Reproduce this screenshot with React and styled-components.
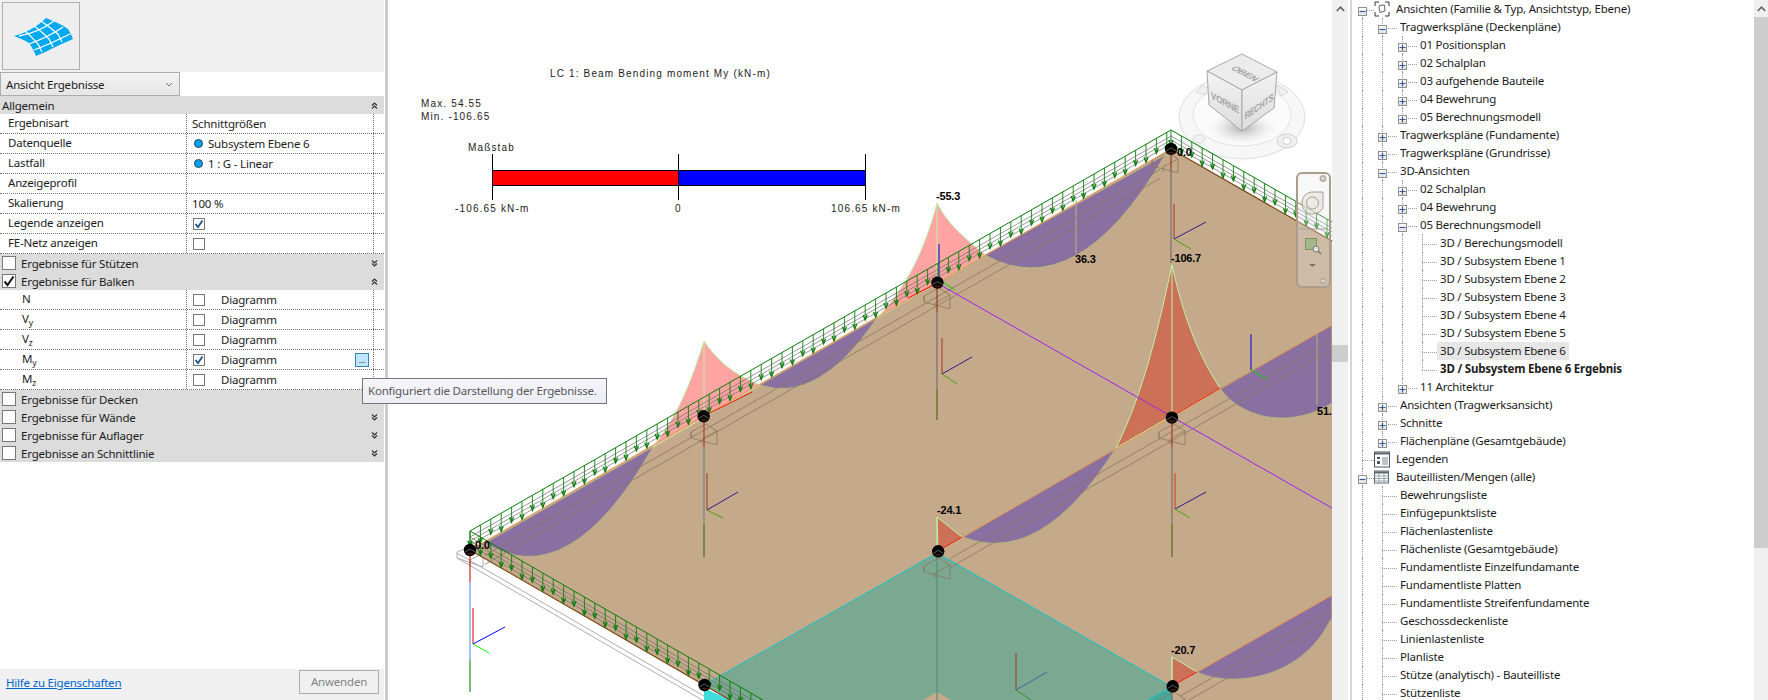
import React from 'react';
import styled, { createGlobalStyle } from 'styled-components';

const UI_FONT = '"Noto Sans", "Open Sans", sans-serif';

const GlobalStyle = createGlobalStyle`
  html, body { margin: 0; padding: 0; background: #fff; }
  body { font-family: ${UI_FONT}; font-size: 11.5px; letter-spacing: -0.2px; color: #1c1c1c; overflow: hidden; }
`;

const Page = styled.div`
  display: flex;
  width: 1768px;
  height: 700px;
  overflow: hidden;
  background: #fff;
`;

/* ---------- left properties panel ---------- */

const Panel = styled.aside`
  width: 385px;
  flex: none;
  display: flex;
  flex-direction: column;
  position: relative;
  background: #fff;
  border-right: 3px solid #cccccc;
`;

const PanelInner = styled.div`
  width: 384px;
  flex: 1;
  display: flex;
  flex-direction: column;
`;

const TopBar = styled.div`
  height: 72px;
  padding: 2px;
  box-sizing: border-box;
  background: #f0f0f0;
`;

const TypeButton = styled.div`
  width: 78px;
  height: 68px;
  box-sizing: border-box;
  border: 1px solid #adadad;
  background: #eeeeee;
`;

const Dropdown = styled.div`
  width: 180px;
  height: 24px;
  box-sizing: border-box;
  border: 1px solid #adadad;
  background: linear-gradient(#f2f2f2, #e6e6e6);
  display: flex;
  align-items: center;
  justify-content: space-between;
  padding: 0 6px 0 5px;
`;

const GroupHeader = styled.div`
  height: 18px;
  background: #dcdcdc;
  display: flex;
  align-items: center;
  gap: 5px;
  padding: 0 6px 0 2px;
  box-sizing: border-box;
`;

const GroupTitle = styled.span`
  flex: 1;
`;

const PropRow = styled.div`
  display: grid;
  grid-template-columns: 187px 187px 10px;
  height: 20px;
  box-sizing: border-box;
  border-bottom: 1px dotted #707070;
`;

const PropLabel = styled.div`
  padding-left: ${p => (p.$sub ? '22px' : '8px')};
  border-right: 1px dotted #707070;
  line-height: 18px;
`;

const PropValue = styled.div`
  display: flex;
  align-items: center;
  padding-left: ${p => (p.$box ? '6px' : '5px')};
  border-right: 1px dotted #707070;
`;

const Dot = styled.span`
  width: 7px;
  height: 7px;
  margin: 0 5px 0 2px;
  border-radius: 50%;
  background: #00a2ed;
  border: 1px solid #24465c;
`;

const CheckBox = styled.span`
  width: ${p => (p.$big ? '14px' : '12px')};
  height: ${p => (p.$big ? '14px' : '12px')};
  box-sizing: border-box;
  flex: none;
  background: #fff;
  border: 1px solid #777;
  display: flex;
  align-items: center;
  justify-content: center;
`;

const DiagramLabel = styled.span`
  margin-left: 16px;
  flex: 1;
`;

const EllipsisButton = styled.span`
  width: 14px;
  height: 14px;
  box-sizing: border-box;
  margin-right: 4px;
  border: 1px solid #3c7fb1;
  background: #bee6fd;
  font-size: 9px;
  line-height: 11px;
  text-align: center;
  color: #333;
`;

const PanelSpacer = styled.div`
  flex: 1;
`;

const Footer = styled.div`
  height: 30px;
  background: #f0f0f0;
  display: flex;
  align-items: flex-start;
  justify-content: space-between;
  padding: 1px 5px 0 6px;
`;

const HelpLink = styled.a`
  color: #0066cc;
  text-decoration: underline;
  line-height: 26px;
`;

const ApplyButton = styled.div`
  width: 80px;
  height: 24px;
  box-sizing: border-box;
  border: 1px solid #adadad;
  color: #838383;
  text-align: center;
  line-height: 21px;
`;

const Tooltip = styled.div`
  position: absolute;
  left: 362px;
  top: 378px;
  width: 245px;
  height: 26px;
  box-sizing: border-box;
  z-index: 5;
  border: 1px solid #767676;
  background: linear-gradient(#f5f5fa, #ecedf4);
  color: #575757;
  padding-left: 5px;
  line-height: 23px;
  white-space: nowrap;
`;

/* ---------- model view ---------- */

const Canvas = styled.main`
  width: 944px;
  flex: none;
  height: 700px;
  position: relative;
  overflow: hidden;
  background: #fff;
`;

const ChartText = styled.text`
  font-family: "Liberation Sans", Arial, sans-serif;
  font-size: 10px;
  letter-spacing: 1.15px;
  fill: #222;
`;

const ValueText = styled.text`
  font-family: "Liberation Sans", Arial, sans-serif;
  font-size: 11px;
  font-weight: 700;
  letter-spacing: -0.2px;
  fill: #000;
`;

const CubeText = styled.text`
  font-family: "Liberation Sans", Arial, sans-serif;
  font-size: 10px;
  font-weight: 700;
  fill: #a4a4a4;
  text-anchor: middle;
`;

const NavBar = styled.div`
  position: absolute;
  left: 908px;
  top: 172px;
  width: 35px;
  height: 116px;
  box-sizing: border-box;
  border: 2px solid #ab9d8c;
  border-radius: 6px;
  background: rgba(232, 232, 232, 0.3);
`;

const ScrollTrack = styled.div`
  width: ${p => p.$w}px;
  flex: none;
  height: 700px;
  background: #f0f0f0;
  display: flex;
  flex-direction: column;
  align-items: center;
`;

const ScrollArrow = styled.div`
  height: 17px;
  width: 100%;
  display: flex;
  align-items: center;
  justify-content: center;
`;

const ScrollThumb = styled.div`
  width: 100%;
  height: ${p => p.$h}px;
  margin-top: ${p => p.$top}px;
  background: #cdcdcd;
`;

const Gutter = styled.div`
  width: 4px;
  flex: none;
  background: #fff;
  border-right: 2px solid #d6d6d6;
  box-sizing: border-box;
`;

/* ---------- project tree ---------- */

const Tree = styled.nav`
  flex: 1;
  height: 700px;
  overflow: hidden;
`;

const TreeRow = styled.div`
  display: flex;
  height: 18px;
  line-height: 18px;
  white-space: nowrap;
`;

const Guide = styled.span`
  width: 20px;
  height: 18px;
  flex: none;
  position: relative;
  display: flex;
  justify-content: center;
  padding-top: 7px;
  box-sizing: border-box;
  &::before {
    content: '';
    display: ${p => (p.$top || p.$bottom ? 'block' : 'none')};
    position: absolute;
    left: 10px;
    top: ${p => (p.$top ? '0' : '10px')};
    bottom: ${p => (p.$bottom ? '0' : '8px')};
    border-left: 1px dotted #9a9a9a;
  }
  &::after {
    content: '';
    display: ${p => (p.$branch ? 'block' : 'none')};
    position: absolute;
    left: 10px;
    top: 10px;
    width: ${p => p.$branch}px;
    border-top: 1px dotted #9a9a9a;
  }
`;

const Expander = styled.span`
  width: 9px;
  height: 9px;
  box-sizing: border-box;
  border: 1px solid #919191;
  background: linear-gradient(#ffffff, #e4e4e4);
  position: relative;
  z-index: 1;
  display: flex;
  align-items: center;
  justify-content: center;
`;

const RootIcon = styled.span`
  width: 16px;
  height: 18px;
  flex: none;
  margin-left: 2px;
  margin-right: 3px;
`;

const TreeLabel = styled.span`
  margin-left: ${p => (p.$root ? '0' : '5px')};
  padding: 0 3px;
  font-weight: ${p => (p.$bold ? 700 : 400)};
  background: ${p => (p.$selected ? '#e6e6e6' : 'transparent')};
`;

/* ---------- small drawings ---------- */

const DoubleChevron = ({ up }) => (
  <svg width="7" height="7" viewBox="0 0 7 7">
    <path
      d={up ? 'M1 3.5 3.5 1 6 3.5M1 6.5 3.5 4 6 6.5' : 'M1 .5 3.5 3 6 .5M1 3.5 3.5 6 6 3.5'}
      fill="none"
      stroke="#333"
      strokeWidth="1.2"
    />
  </svg>
);

const Tick = ({ big }) =>
  big ? (
    <svg width="12" height="12" viewBox="0 0 12 12">
      <path d="M1.5 6.5 4.5 10 10.5 1.5" fill="none" stroke="#111" strokeWidth="2" />
    </svg>
  ) : (
    <svg width="10" height="10" viewBox="0 0 10 10">
      <path d="M1.5 5 4 8 8.5 1.5" fill="none" stroke="#1f4f80" strokeWidth="1.8" />
    </svg>
  );

const SurfaceIcon = () => (
  <svg width="76" height="66" viewBox="0 0 76 66">
    <path
      d="M11 33C20 31 33 25 43 15C50 18 58 21 65 26C67 30 69 33 70 36C60 40 47 47 33 53C31 48 29 44 26 40C22 37 16 35 11 33Z"
      fill="#00a8f0"
    />
    <path
      d="M22 28C27 32 31 37 35 41L39 49M31 23C37 27 42 32 46 36L50 44M38 18C44 22 50 27 55 31L59 39M16 33C28 31 40 26 51 18M26 41C37 37 50 31 60 24M31 47C42 43 55 37 67 31"
      fill="none"
      stroke="#fff"
      strokeWidth="1.3"
    />
  </svg>
);

const ViewsIcon = () => (
  <svg width="16" height="18" viewBox="0 0 16 18">
    <path d="M1 6V2h4M11 2h4v4M15 12v4h-4M5 16H1v-4" fill="none" stroke="#333" />
    <path d="M5.5 5.5 10.5 5 11 11 6 12.5 5 7Z" fill="none" stroke="#5a6470" />
  </svg>
);

const LegendIcon = () => (
  <svg width="16" height="18" viewBox="0 0 16 18">
    <rect x=".5" y="2" width="15" height="15" fill="#fff" stroke="#4a5560" />
    <rect x="1" y="2.5" width="14" height="2" fill="#5d6873" />
    <path d="M3 7h3v2H3zM3 11h3v3H3z" fill="#4a5560" />
    <path d="M8 8h6M8 10h6M8 12h6M8 14h6" stroke="#7c8792" />
  </svg>
);

const ScheduleIcon = () => (
  <svg width="16" height="18" viewBox="0 0 16 18">
    <rect x=".5" y="3" width="14" height="12" fill="#fff" stroke="#5d6873" />
    <rect x="1" y="3.5" width="13" height="2" fill="#5d6873" />
    <path d="M1 8h13M1 10.5h13M1 13h13M5 5v10M10 5v10" stroke="#9aa4ae" />
  </svg>
);

/* ---------- model drawing, coordinates are page pixels ---------- */

const node = (i, j) => [470 + i * 233.7 + j * 234.5, 550 - i * 133.7 + j * 135];

const EDGES = [
  { from: [470, 550], to: [1171, 149] },
  { from: [1171, 149], to: [1346, 249] },
  { from: [470, 550], to: [775, 726] },
];

const PURPLE_SPANS = [
  'M485 543Q569 595 653 447Z',
  'M760 385Q818 405 877 318Z',
  'M985 255Q1077 306 1165 155Z',
  'M963 537Q1040 568 1116 448Z',
  'M1220 388C1240 418 1290 430 1332 403L1332 325Z',
  'M1197 672C1225 686 1300 685 1332 617L1332 595Z',
];

const PEAKS = [
  { d: 'M704 341C690 385 678 415 653 447L760 385C735 375 718 362 704 341Z', fill: '#ffa3a3' },
  { d: 'M937 203C925 250 905 290 877 318L985 255C965 238 948 225 937 203Z', fill: '#ffa3a3' },
  { d: 'M1172 265C1160 320 1145 390 1116 448L1220 388C1195 350 1182 310 1172 265Z', fill: '#cc7058' },
  { d: 'M937 517 962 537 938 551Z', fill: '#cc7058' },
  { d: 'M1172 657 1197 672 1172 686Z', fill: '#cc7058' },
];

const TRIPODS = [
  { o: [473, 644], r: [473, 608], b: [505, 627], g: [489, 653], c: ['#e00000', '#0000ff', '#00ff00'] },
  { o: [707, 510], r: [707, 473], b: [738, 492], g: [723, 518] },
  { o: [942, 374], r: [942, 338], b: [972, 357], g: [957, 384] },
  { o: [1174, 239], r: [1174, 204], b: [1206, 222], g: [1191, 249] },
  { o: [1175, 509], r: [1175, 473], b: [1206, 492], g: [1190, 518], c: ['#e03010', '#301890', '#50a010'] },
  { o: [1016, 690], r: [1016, 653], b: [1047, 672], g: [1031, 700], c: ['#a03828', '#3a6a98', '#3a9030'] },
];

const COLUMNS = [
  { x: 470, parts: [[550, 582, '#d01010'], [582, 660, '#5a90d8'], [660, 692, '#108010']] },
  { x: 704, parts: [[416, 447, '#b03020'], [447, 525, '#6f7d8c'], [525, 557, '#306a10']] },
  { x: 937, parts: [[283, 312, '#903020'], [312, 390, '#6c6c70'], [390, 420, '#4a6010']] },
  { x: 1171, parts: [[149, 170, '#903020'], [170, 263, '#6c6c70']] },
  { x: 1172, parts: [[416, 447, '#a03020'], [447, 525, '#6c6c70'], [525, 557, '#4a6010']] },
  { x: 937, parts: [[553, 700, '#4f8a78']] },
  { x: 1172, parts: [[687, 700, '#6c6c70']] },
];

const Rail = ({ from, to }) => {
  const slope = (to[1] - from[1]) / (to[0] - from[0]);
  const count = Math.floor((to[0] - from[0]) / 10.4);
  const posts = Array.from({ length: count + 1 }, (_, n) => {
    const x = from[0] + n * 10.4;
    return [x, from[1] + (x - from[0]) * slope];
  });
  const line = off => `M${from[0]} ${from[1] + off}L${to[0]} ${to[1] + off}`;
  return (
    <g>
      <path d={line(-5)} stroke="#6e6e6e" strokeWidth=".7" fill="none" />
      <path d={line(-9)} stroke="#6e6e6e" strokeWidth=".7" fill="none" />
      <path d={line(-13)} stroke="#6e6e6e" strokeWidth=".7" fill="none" />
      <path d={line(-19)} stroke="#0b7d0b" strokeWidth="1" fill="none" />
      {posts.map(([x, y], n) => {
        const tip = y - (n % 2 ? 1 : 4);
        return (
          <g key={n} fill="none" stroke="#0b7d0b">
            <path d={`M${x} ${y - 19}V${tip}`} strokeWidth=".9" />
            <path d={`M${x - 2} ${tip - 5}L${x} ${tip}L${x + 2} ${tip - 5}`} strokeWidth="1.3" />
          </g>
        );
      })}
    </g>
  );
};

const BeamWire = ({ j, start, end }) => {
  const [x0, y0] = node(0, j);
  const at = x => y0 - (x - x0) * 0.572;
  return (
    <path
      d={`M${start} ${at(start) + 14}L${end} ${at(end) + 14}M${start} ${at(start) + 23}L${end} ${at(end) + 23}`}
      stroke="#8a7660"
      strokeWidth=".8"
      fill="none"
    />
  );
};

const Support = ({ x, y }) => (
  <path
    d={`M${x - 13} ${y + 8}L${x + 2} ${y}L${x + 13} ${y + 7}V${y + 21}L${x - 13} ${y + 14}ZM${x - 13} ${y + 14}V${y + 8}M${x + 13} ${y + 7}L${x - 2} ${y + 15}V${y + 20}`}
    stroke="#8a7660"
    strokeWidth=".8"
    fill="none"
  />
);

const Joint = ({ p }) => (
  <g>
    <circle cx={p[0]} cy={p[1]} r="6.2" fill="#000" />
    <path d={`M${p[0] - 5} ${p[1] + 2}L${p[0]} ${p[1] - 1}L${p[0] + 5} ${p[1] + 2}`} stroke="#fff" strokeWidth=".6" fill="none" opacity=".6" />
    <path d={`M${p[0] - 4} ${p[1] + 3}A5 5 0 0 0 ${p[0] + 4} ${p[1] + 3}Z`} fill="#3a1c06" />
  </g>
);

const Model = () => (
  <svg width="944" height="700" viewBox="388 0 944 700" style={{ display: 'block' }}>
    <defs>
      <radialGradient id="cubeShadow">
        <stop offset="0" stopColor="#9a9a9a" stopOpacity=".8" />
        <stop offset="1" stopColor="#f4f4f4" stopOpacity="0" />
      </radialGradient>
      <linearGradient id="cubeLeft" x1="0" y1="0" x2="0" y2="1">
        <stop offset="0" stopColor="#f3f3f3" />
        <stop offset="1" stopColor="#dcdcdc" />
      </linearGradient>
    </defs>

    <ChartText x="550" y="77">LC 1: Beam Bending moment My (kN-m)</ChartText>
    <ChartText x="421" y="107">Max. 54.55</ChartText>
    <ChartText x="421" y="120">Min. -106.65</ChartText>
    <ChartText x="468" y="151">Maßstab</ChartText>
    <path d="M492.5 154V200M678.5 154V200M865.5 154V200" stroke="#000" />
    <rect x="492.5" y="170.5" width="186" height="15" fill="#ff0000" stroke="#000" />
    <rect x="678.5" y="170.5" width="187" height="15" fill="#0000ff" stroke="#000" />
    <ChartText x="455" y="212">-106.65 kN-m</ChartText>
    <ChartText x="675" y="212">0</ChartText>
    <ChartText x="831" y="212">106.65 kN-m</ChartText>

    <ellipse cx="1242" cy="117" rx="63" ry="42" fill="#f7f7f7" stroke="#dedede" />
    <ellipse cx="1242" cy="115" rx="49" ry="31" fill="#fbfbfb" stroke="#e2e2e2" />
    <ellipse cx="1242" cy="128" rx="38" ry="18" fill="url(#cubeShadow)" />
    <ellipse cx="1287" cy="141" rx="10" ry="7" fill="#eeeeee" stroke="#cfcfcf" />
    <ellipse cx="1287" cy="141" rx="4" ry="3.5" fill="#fff" stroke="#cfcfcf" />
    <ellipse cx="1199" cy="139" rx="6" ry="4" fill="#f2f2f2" stroke="#d8d8d8" />
    <path d="M1196 92l7-7 7 4-7 6ZM1276 85l8 4 4 3-7 4Z" fill="#efefef" stroke="#d8d8d8" />
    <path d="M1242 54 1277 72 1242 90 1207 71Z" fill="#ececec" stroke="#a8a8a8" />
    <path d="M1207 71 1242 90V131L1209 105Z" fill="url(#cubeLeft)" stroke="#a8a8a8" />
    <path d="M1242 90 1277 72 1274 108 1242 131Z" fill="url(#cubeLeft)" stroke="#a8a8a8" />
    <CubeText transform="matrix(.85 .45 -.85 .45 1242 75)">OBEN</CubeText>
    <CubeText transform="matrix(.82 .45 0 1 1225 106)">VORNE</CubeText>
    <CubeText transform="matrix(.72 -.5 0 1 1259 110)">RECHTS</CubeText>

    <path d="M470 550 1171 149 1332 241V700H730Z" fill="#c4aa8b" />
    <path d="M937 553 704 685 730 700H923L937 692 951 700H1148L1172 687Z" fill="#7aa890" />
    <path d="M704 688 730 700H704Z" fill="#40dcdc" />
    <path d="M1172 687 1148 700H1172Z" fill="#46a898" />

    <path d="M457 553 704 696M457 558 704 701" stroke="#adadad" fill="none" />
    <path d="M457 552 472 546 483 553V567L457 558ZM483 553 470 560V567" stroke="#adadad" fill="none" />

    {PURPLE_SPANS.map(d => (
      <path key={d} d={d} fill="#8a70a0" stroke="#b4b480" strokeWidth="1" />
    ))}
    {PEAKS.map(p => (
      <path key={p.d} d={p.d} fill={p.fill} stroke="#bdf2a8" strokeWidth="1" />
    ))}
    <path d="M937 203V283M704 341V416M1172 265V416M937 517V551M1172 657V686" stroke="#bdf2a8" fill="none" />
    <path d="M1076 200V254M1317 332V405" stroke="#b4b480" fill="none" />

    <BeamWire j={0} start={485} end={1160} />
    <BeamWire j={1} start={950} end={1332} />
    <BeamWire j={2} start={1180} end={1332} />
    <Support x={704} y={424} />
    <Support x={937} y={288} />
    <Support x={1172} y={424} />
    <Support x={937} y={558} />
    <Support x={1172} y={692} />
    <Support x={1165} y={152} />

    <path d="M470 550 1171 149" stroke="#ee9050" fill="none" />
    <path d="M938 551 1332 325M1172 686 1332 595" stroke="#ee9050" fill="none" />
    <path d="M470 550 775 726M1171 149 1332 241" stroke="#7a4414" strokeWidth="1.2" fill="none" />
    <path d="M908 298 937 283M704 416 752 392M938 551 962 537M1172 416 1220 388M1172 686 1197 672" stroke="#e81010" fill="none" />
    <path d="M937 553 704 685M937 553 1172 687M1172 687 1148 700" stroke="#12c4ca" fill="none" />
    <path d="M937 283 1332 508" stroke="#a020f0" fill="none" />

    {COLUMNS.map(c =>
      c.parts.map(([a, b, color]) => (
        <path key={`${c.x}-${a}`} d={`M${c.x} ${a}V${b}`} stroke={color} strokeWidth="1.1" fill="none" />
      )),
    )}
    <path d="M939 244V280M1251 334V370" stroke="#0000e0" fill="none" />
    <path d="M939 280 955 290M1251 370 1267 379" stroke="#00d800" fill="none" />
    {TRIPODS.map(({ o, r, b, g, c = ['#a83020', '#301890', '#50a010'] }) => (
      <g key={o.join()} fill="none">
        <path d={`M${o}L${r}`} stroke={c[0]} />
        <path d={`M${o}L${b}`} stroke={c[1]} />
        <path d={`M${o}L${g}`} stroke={c[2]} />
      </g>
    ))}

    {EDGES.map(e => (
      <Rail key={e.to.join()} from={e.from} to={e.to} />
    ))}

    {[node(0, 0), node(1, 0), node(2, 0), node(3, 0), node(0, 1), node(1, 1), node(2, 1), node(1, 2)].map(p => (
      <Joint key={p.join()} p={p} />
    ))}

    <ValueText x="936" y="200">-55.3</ValueText>
    <ValueText x="1075" y="263">36.3</ValueText>
    <ValueText x="1171" y="262">-106.7</ValueText>
    <ValueText x="1317" y="415">51.</ValueText>
    <ValueText x="937" y="514">-24.1</ValueText>
    <ValueText x="1171" y="654">-20.7</ValueText>
    <ValueText x="1177" y="156">0.0</ValueText>
    <ValueText x="475" y="549">0.0</ValueText>
  </svg>
);

const NavWheel = () => (
  <svg width="31" height="112" viewBox="0 0 31 112">
    <circle cx="25" cy="4.5" r="3.5" fill="#b8b0a6" />
    <path d="M23.5 3 26.5 6M26.5 3 23.5 6" stroke="#f4f0ea" />
    <path d="M4 29C4 22 9 18 15 18H25V32C25 36 20 40 14 40C8 40 4 35 4 29Z" fill="#e6e0d8" fillOpacity=".6" stroke="#a89e92" />
    <circle cx="14.5" cy="29" r="6" fill="none" stroke="#a89e92" />
    <path d="M1 55H28" stroke="#a89e92" />
    <rect x="7.5" y="64.5" width="11" height="11" fill="#a7b58a" stroke="#7e9366" />
    <circle cx="18" cy="75" r="3" fill="#e0e0e0" stroke="#7a7a7a" />
    <path d="M20 77 23 80" stroke="#7a7a7a" strokeWidth="1.5" />
    <path d="M11 90H18L14.5 93Z" fill="#7c7468" />
    <circle cx="25" cy="107" r="3.5" fill="#b8b0a6" />
    <path d="M23 107H27" stroke="#f4f0ea" />
  </svg>
);

const ChevronUp = () => (
  <svg width="9" height="6" viewBox="0 0 9 6">
    <path d="M.8 5 4.5 1.2 8.2 5" fill="none" stroke="#606060" strokeWidth="1.6" />
  </svg>
);

/* ---------- data ---------- */

const GENERAL_ROWS = [
  { label: 'Ergebnisart', value: 'Schnittgrößen' },
  { label: 'Datenquelle', value: 'Subsystem Ebene 6', dot: true },
  { label: 'Lastfall', value: '1 : G - Linear', dot: true },
  { label: 'Anzeigeprofil', value: '' },
  { label: 'Skalierung', value: '100 %' },
  { label: 'Legende anzeigen', check: true },
  { label: 'FE-Netz anzeigen', check: false },
];

const BEAM_ROWS = [
  { label: 'N' },
  { label: 'V', sub: 'y' },
  { label: 'V', sub: 'z' },
  { label: 'M', sub: 'y', checked: true, button: true },
  { label: 'M', sub: 'z' },
];

const Sub = styled.sub`
  font-size: 8.5px;
  line-height: 0;
`;

const t = (level, text, box, extra) => ({ level, text, box, ...extra });

const TREE = [
  t(0, 'Ansichten (Familie & Typ, Ansichtstyp, Ebene)', '-', { icon: ViewsIcon }),
  t(1, 'Tragwerkspläne (Deckenpläne)', '-'),
  t(2, '01 Positionsplan', '+'),
  t(2, '02 Schalplan', '+'),
  t(2, '03 aufgehende Bauteile', '+'),
  t(2, '04 Bewehrung', '+'),
  t(2, '05 Berechnungsmodell', '+'),
  t(1, 'Tragwerkspläne (Fundamente)', '+'),
  t(1, 'Tragwerkspläne (Grundrisse)', '+'),
  t(1, '3D-Ansichten', '-'),
  t(2, '02 Schalplan', '+'),
  t(2, '04 Bewehrung', '+'),
  t(2, '05 Berechnungsmodell', '-'),
  t(3, '3D / Berechungsmodell'),
  t(3, '3D / Subsystem Ebene 1'),
  t(3, '3D / Subsystem Ebene 2'),
  t(3, '3D / Subsystem Ebene 3'),
  t(3, '3D / Subsystem Ebene 4'),
  t(3, '3D / Subsystem Ebene 5'),
  t(3, '3D / Subsystem Ebene 6', null, { selected: true }),
  t(3, '3D / Subsystem Ebene 6 Ergebnis', null, { bold: true }),
  t(2, '11 Architektur', '+'),
  t(1, 'Ansichten (Tragwerksansicht)', '+'),
  t(1, 'Schnitte', '+'),
  t(1, 'Flächenpläne (Gesamtgebäude)', '+'),
  t(0, 'Legenden', null, { icon: LegendIcon }),
  t(0, 'Bauteillisten/Mengen (alle)', '-', { icon: ScheduleIcon }),
  t(1, 'Bewehrungsliste'),
  t(1, 'Einfügepunktsliste'),
  t(1, 'Flächenlastenliste'),
  t(1, 'Flächenliste (Gesamtgebäude)'),
  t(1, 'Fundamentliste Einzelfundamante'),
  t(1, 'Fundamentliste Platten'),
  t(1, 'Fundamentliste Streifenfundamente'),
  t(1, 'Geschossdeckenliste'),
  t(1, 'Linienlastenliste'),
  t(1, 'Planliste'),
  t(1, 'Stütze (analytisch) - Bauteilliste'),
  t(1, 'Stützenliste'),
];

// the list goes on below the fold, so running off the end counts as "has a sibling"
const hasNext = (index, level) => {
  for (let k = index + 1; k < TREE.length; k++) {
    if (TREE[k].level < level) return false;
    if (TREE[k].level === level) return true;
  }
  return true;
};

const BoxSign = ({ sign }) => (
  <svg width="7" height="7" viewBox="0 0 7 7">
    <path d={sign === '+' ? 'M.5 3.5h6M3.5.5v6' : 'M.5 3.5h6'} stroke="#3a5a9a" strokeWidth="1.2" />
  </svg>
);

const ProjectTree = () => (
  <Tree>
    {TREE.map((row, i) => {
      const Icon = row.icon;
      return (
        <TreeRow key={i}>
          {Array.from({ length: row.level + 1 }, (_, c) => {
            const own = c === row.level;
            return (
              <Guide
                key={c}
                $top={own ? i > 0 : hasNext(i, c)}
                $bottom={hasNext(i, c)}
                $branch={own ? (row.level === 0 ? 12 : 15) : 0}
              >
                {own && row.box && (
                  <Expander>
                    <BoxSign sign={row.box} />
                  </Expander>
                )}
              </Guide>
            );
          })}
          {Icon && (
            <RootIcon>
              <Icon />
            </RootIcon>
          )}
          <TreeLabel $root={!!Icon} $selected={row.selected} $bold={row.bold}>
            {row.text}
          </TreeLabel>
        </TreeRow>
      );
    })}
  </Tree>
);

const ResultGroup = ({ title, checked, up }) => (
  <GroupHeader>
    <CheckBox $big>{checked && <Tick big />}</CheckBox>
    <GroupTitle>{title}</GroupTitle>
    <DoubleChevron up={up} />
  </GroupHeader>
);

export default function App() {
  return (
    <Page>
      <GlobalStyle />
      <Panel>
        <PanelInner>
          <TopBar>
            <TypeButton>
              <SurfaceIcon />
            </TypeButton>
          </TopBar>
          <Dropdown>
            Ansicht Ergebnisse
            <svg width="8" height="5" viewBox="0 0 8 5">
              <path d="M1 1 4 4 7 1" fill="none" stroke="#777" />
            </svg>
          </Dropdown>
          <GroupHeader>
            <GroupTitle>Allgemein</GroupTitle>
            <DoubleChevron up />
          </GroupHeader>
          {GENERAL_ROWS.map(row => (
            <PropRow key={row.label}>
              <PropLabel>{row.label}</PropLabel>
              <PropValue $box={row.check !== undefined}>
                {row.dot && <Dot />}
                {row.check !== undefined ? <CheckBox>{row.check && <Tick />}</CheckBox> : row.value}
              </PropValue>
              <span />
            </PropRow>
          ))}
          <ResultGroup title="Ergebnisse für Stützen" />
          <ResultGroup title="Ergebnisse für Balken" checked up />
          {BEAM_ROWS.map(row => (
            <PropRow key={row.label + row.sub}>
              <PropLabel $sub>
                {row.label}
                {row.sub && <Sub>{row.sub}</Sub>}
              </PropLabel>
              <PropValue $box>
                <CheckBox>{row.checked && <Tick />}</CheckBox>
                <DiagramLabel>Diagramm</DiagramLabel>
                {row.button && <EllipsisButton>...</EllipsisButton>}
              </PropValue>
              <span />
            </PropRow>
          ))}
          <ResultGroup title="Ergebnisse für Decken" />
          <ResultGroup title="Ergebnisse für Wände" />
          <ResultGroup title="Ergebnisse für Auflager" />
          <ResultGroup title="Ergebnisse an Schnittlinie" />
          <PanelSpacer />
          <Footer>
            <HelpLink>Hilfe zu Eigenschaften</HelpLink>
            <ApplyButton>Anwenden</ApplyButton>
          </Footer>
        </PanelInner>
        <Tooltip>Konfiguriert die Darstellung der Ergebnisse.</Tooltip>
      </Panel>
      <Canvas>
        <Model />
        <NavBar>
          <NavWheel />
        </NavBar>
      </Canvas>
      <ScrollTrack $w={16}>
        <ScrollArrow>
          <ChevronUp />
        </ScrollArrow>
        <ScrollThumb $top={328} $h={17} />
      </ScrollTrack>
      <Gutter />
      <ProjectTree />
      <ScrollTrack $w={14}>
        <ScrollArrow>
          <ChevronUp />
        </ScrollArrow>
        <ScrollThumb $top={0} $h={531} />
      </ScrollTrack>
    </Page>
  );
}
